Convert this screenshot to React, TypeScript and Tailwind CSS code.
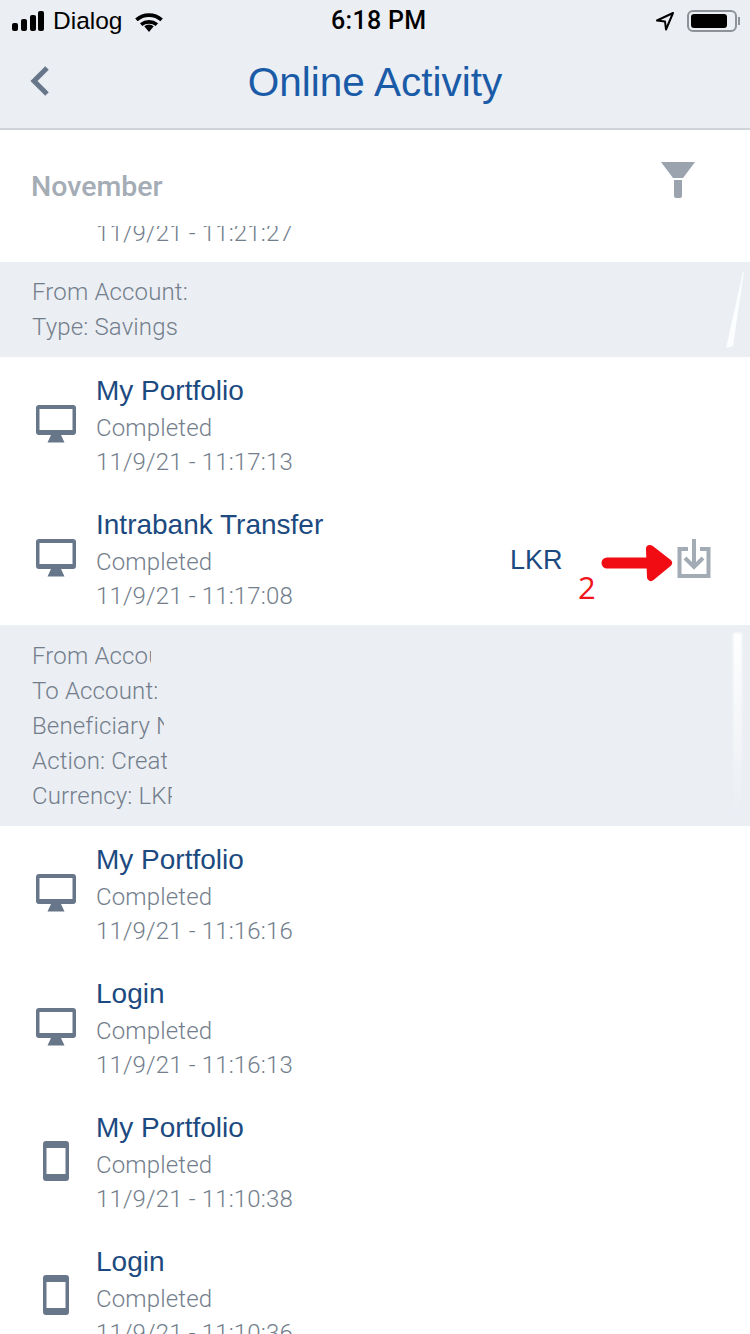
import React from "react";

const Monitor = () => (
  <svg width="40" height="38" viewBox="0 0 40 38" className="text-[#68768a]">
    <path
      fill="currentColor"
      fillRule="evenodd"
      d="M3 0h34a3 3 0 0 1 3 3v24a3 3 0 0 1-3 3H3a3 3 0 0 1-3-3V3a3 3 0 0 1 3-3zM3.500 4v21h33V4zM15 30h10l3.500 7.500h-17z"
    />
  </svg>
);

const Phone = () => (
  <svg width="26" height="40" viewBox="0 0 26 40" className="text-[#68768a]">
    <path
      fill="currentColor"
      fillRule="evenodd"
      d="M3 0h20a3 3 0 0 1 3 3v34a3 3 0 0 1-3 3H3a3 3 0 0 1-3-3V3a3 3 0 0 1 3-3zM3.500 7v26h19V7z"
    />
  </svg>
);

const gray = "font-['Roboto',sans-serif] font-light text-[24px] leading-[34px] tracking-[0.15px] text-[#737e8c]";

const Row = ({ title, date, device, children }: { title: string; date: string; device: "desktop" | "phone"; children?: React.ReactNode }) => (
  <div className="relative flex items-center h-[134px] shrink-0 bg-white">
    <div className="w-[96px] flex justify-center pl-[16px] shrink-0">
      {device === "desktop" ? <Monitor /> : <Phone />}
    </div>
    <div className="pt-[4px]">
      <div className="font-['Liberation_Sans',sans-serif] text-[28px] leading-[34px] text-[#1c4a80]">{title}</div>
      <div className={`${gray} mt-[3px]`}>Completed</div>
      <div className={gray}>{date}</div>
    </div>
    {children}
  </div>
);

const PanelLine = ({ text, width }: { text: string; width: string }) => (
  <div className={`${gray} overflow-hidden whitespace-nowrap h-[35px] ${width}`}>{text}</div>
);

export default function App() {
  return (
    <div className="w-[750px] h-[1334px] overflow-hidden flex flex-col bg-white font-['Liberation_Sans',sans-serif]">
      {/* status bar + title */}
      <div className="h-[130px] shrink-0 bg-[#ebeef3] border-b-2 border-[#d0d4d9]">
        <div className="relative flex items-center justify-between h-[42px] pl-[12px] pr-[10px]">
          <div className="flex items-center">
            <svg width="36" height="20" viewBox="0 0 36 20">
              <rect x="0" y="12" width="6" height="8" rx="2" fill="#000" />
              <rect x="9" y="8" width="6" height="12" rx="2" fill="#000" />
              <rect x="18" y="4" width="6" height="16" rx="2" fill="#000" />
              <rect x="26" y="0" width="6" height="20" rx="2" fill="#000" />
            </svg>
            <span className="ml-[5px] text-[24.500px] leading-[42px] text-black">Dialog</span>
            <svg width="30" height="21" viewBox="0 0 28 20" className="ml-[12px]">
              <path d="M14 20l-4.500-5.500a7 7 0 0 1 9 0z" fill="#000" />
              <path d="M2 8.500a18 18 0 0 1 24 0M6.500 13a12 12 0 0 1 15 0" fill="none" stroke="#000" strokeWidth="3.500" />
            </svg>
          </div>
          <span className="absolute left-[331px] top-0 text-[25px] leading-[42px] tracking-[0.3px] text-black font-['Roboto',sans-serif] font-medium">
            6:18 PM
          </span>
          <div className="flex items-center">
            <svg width="20" height="20" viewBox="0 0 20 20">
              <path d="M18 2L2 9.500l8 1 1 8z" fill="none" stroke="#000" strokeWidth="2" strokeLinejoin="round" />
            </svg>
            <div className="ml-[12px] w-[50px] h-[22px] rounded-[6px] border-2 border-[#8d9299] p-[2px]">
              <div className="w-[36px] h-full rounded-[3px] bg-black" />
            </div>
            <div className="w-[2px] h-[8px] bg-[#8d9299] ml-[1px]" />
          </div>
        </div>
        <div className="relative h-[86px] flex items-center justify-center">
          <svg width="22" height="30" viewBox="0 0 22 30" className="absolute left-[29px] top-[24px]">
            <path d="M18 2L5 15l13 13" fill="none" stroke="#68768a" strokeWidth="5" />
          </svg>
          <span className="text-[40.500px] leading-[50px] text-[#1a5ba8] -mt-[6px]">Online Activity</span>
        </div>
      </div>

      {/* month + filter */}
      <div className="relative h-[96px] shrink-0 flex items-start justify-between pl-[31px] pr-[55px] pt-[30px]">
        <span className="font-['Roboto',sans-serif] font-medium text-[28.500px] leading-[52px] text-[#a4acb5] mt-[1px]">November</span>
        <svg width="34" height="36" viewBox="0 0 34 36" className="mt-[2px]">
          <path d="M0 0h34L22 16H12z" fill="#9aa3ae" />
          <path d="M13 18h8v16a2 2 0 0 1-2 2h-4a2 2 0 0 1-2-2z" fill="#9aa3ae" />
        </svg>
      </div>

      {/* list */}
      <div className="flex-1 overflow-hidden flex flex-col">
        <div className="-mt-[10px] h-[46px] shrink-0 pl-[96px]">
          <div className={gray}>11/9/21 - 11:21:27</div>
        </div>

        <div className="relative shrink-0 h-[95px] bg-[#ebeef3] pl-[32px] pt-[13px]">
          <PanelLine text="From Account:" width="w-[160px]" />
          <PanelLine text="Type: Savings" width="w-[160px]" />
          <svg width="24" height="76" viewBox="0 0 24 76" className="absolute right-0 top-[10px]">
            <path d="M17 0L18 0 7 74 0 76z" fill="#ffffff" opacity="0.85" />
          </svg>
        </div>

        <Row title="My Portfolio" date="11/9/21 - 11:17:13" device="desktop" />
        <Row title="Intrabank Transfer" date="11/9/21 - 11:17:08" device="desktop">
          <span className="absolute left-[510px] top-[52px] text-[27px] leading-[34px] text-[#1c4a80]">LKR</span>
          <svg width="36" height="40" viewBox="0 0 36 40" className="absolute left-[676px] top-[47px]">
            <path d="M12 11H3.500v27h29V11H24" fill="none" stroke="#a3abb5" strokeWidth="4" />
            <path d="M18 1v28M9 20l9 9 9-9" fill="none" stroke="#a3abb5" strokeWidth="4" />
          </svg>
          <svg width="74" height="40" viewBox="0 0 74 40" className="absolute left-[600px] top-[51px]">
            <path d="M7 21h52" stroke="#f10b12" strokeWidth="11" strokeLinecap="round" fill="none" />
            <path d="M50 7l18 14-17 14z" fill="#f10b12" stroke="#f10b12" strokeWidth="8" strokeLinejoin="round" />
          </svg>
          <span className="absolute left-[578px] top-[76px] font-['Open_Sans',sans-serif] text-[31px] leading-[40px] text-[#f1141a]">2</span>
        </Row>

        <div className="relative shrink-0 h-[201px] bg-[#ebeef3] pl-[32px] pt-[14px]">
          <PanelLine text="From Account:" width="w-[119px]" />
          <PanelLine text="To Account:" width="w-[125px]" />
          <PanelLine text="Beneficiary Name" width="w-[132px]" />
          <PanelLine text="Action: Create" width="w-[135px]" />
          <PanelLine text="Currency: LKR" width="w-[140px]" />
          <div className="absolute left-[733px] top-[8px] w-[9px] h-[180px] bg-gradient-to-b from-white to-[#ebeef3] blur-[1px]" />
        </div>

        <Row title="My Portfolio" date="11/9/21 - 11:16:16" device="desktop" />
        <Row title="Login" date="11/9/21 - 11:16:13" device="desktop" />
        <Row title="My Portfolio" date="11/9/21 - 11:10:38" device="phone" />
        <Row title="Login" date="11/9/21 - 11:10:36" device="phone" />
      </div>
    </div>
  );
}
